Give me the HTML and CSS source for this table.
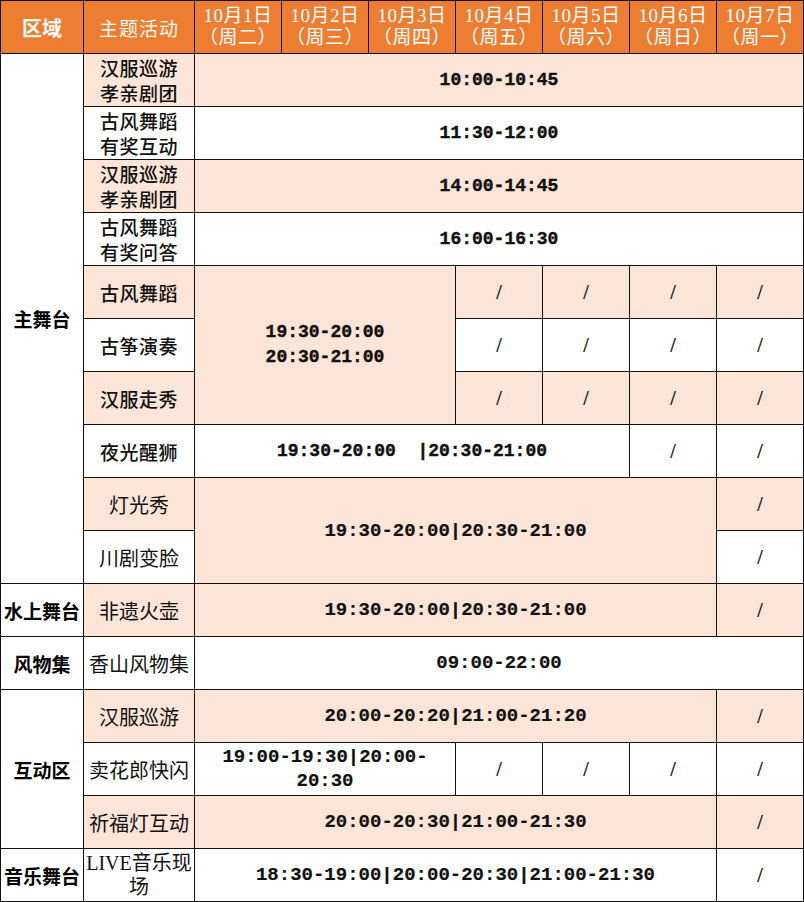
FILE: index.html
```html
<!DOCTYPE html>
<html lang="zh-CN">
<head>
<meta charset="utf-8">
<title>活动安排</title>
<link rel="stylesheet" href="styles.css">
</head>
<body>
<table class="sched">
  <colgroup>
    <col class="c-zone"><col class="c-act">
    <col class="c-day"><col class="c-day"><col class="c-day"><col class="c-day"><col class="c-day"><col class="c-day"><col class="c-day">
  </colgroup>
  <thead>
    <tr>
      <th class="zone-h">区域</th>
      <th class="act-h">主题活动</th>
      <th class="date">10月1日<br>（周二）</th>
      <th class="date">10月2日<br>（周三）</th>
      <th class="date">10月3日<br>（周四）</th>
      <th class="date">10月4日<br>（周五）</th>
      <th class="date">10月5日<br>（周六）</th>
      <th class="date">10月6日<br>（周日）</th>
      <th class="date">10月7日<br>（周一）</th>
    </tr>
  </thead>
  <tbody>
    <tr class="pk">
      <td class="zone" rowspan="10">主舞台</td>
      <td class="act">汉服巡游<br>孝亲剧团</td>
      <td class="t" colspan="7">10:00-10:45</td>
    </tr>
    <tr>
      <td class="act">古风舞蹈<br>有奖互动</td>
      <td class="t" colspan="7">11:30-12:00</td>
    </tr>
    <tr class="pk">
      <td class="act">汉服巡游<br>孝亲剧团</td>
      <td class="t" colspan="7">14:00-14:45</td>
    </tr>
    <tr>
      <td class="act">古风舞蹈<br>有奖问答</td>
      <td class="t" colspan="7">16:00-16:30</td>
    </tr>
    <tr class="pk">
      <td class="act">古风舞蹈</td>
      <td class="t t-two" colspan="3" rowspan="3">19:30-20:00<br>20:30-21:00</td>
      <td class="sl">/</td><td class="sl">/</td><td class="sl">/</td><td class="sl">/</td>
    </tr>
    <tr>
      <td class="act">古筝演奏</td>
      <td class="sl">/</td><td class="sl">/</td><td class="sl">/</td><td class="sl">/</td>
    </tr>
    <tr class="pk">
      <td class="act">汉服走秀</td>
      <td class="sl">/</td><td class="sl">/</td><td class="sl">/</td><td class="sl">/</td>
    </tr>
    <tr>
      <td class="act">夜光醒狮</td>
      <td class="t" colspan="5">19:30-20:00 &nbsp;|20:30-21:00</td>
      <td class="sl">/</td><td class="sl">/</td>
    </tr>
    <tr class="pk">
      <td class="act act-lo">灯光秀</td>
      <td class="t t-lo" colspan="6" rowspan="2">19:30-20:00|20:30-21:00</td>
      <td class="sl">/</td>
    </tr>
    <tr>
      <td class="act act-lo">川剧变脸</td>
      <td class="sl">/</td>
    </tr>
    <tr class="pk">
      <td class="zone wh">水上舞台</td>
      <td class="act act-lo">非遗火壶</td>
      <td class="t t-lo" colspan="6">19:30-20:00|20:30-21:00</td>
      <td class="sl">/</td>
    </tr>
    <tr>
      <td class="zone">风物集</td>
      <td class="act act-lo">香山风物集</td>
      <td class="t t-lo" colspan="7">09:00-22:00</td>
    </tr>
    <tr class="pk">
      <td class="zone wh" rowspan="3">互动区</td>
      <td class="act act-lo">汉服巡游</td>
      <td class="t t-lo" colspan="6">20:00-20:20|21:00-21:20</td>
      <td class="sl">/</td>
    </tr>
    <tr>
      <td class="act act-lo">卖花郎快闪</td>
      <td class="t t-lo t-wrap" colspan="3">19:00-19:30|20:00-<br>20:30</td>
      <td class="sl">/</td><td class="sl">/</td><td class="sl">/</td><td class="sl">/</td>
    </tr>
    <tr class="pk">
      <td class="act act-lo">祈福灯互动</td>
      <td class="t t-lo" colspan="6">20:00-20:30|21:00-21:30</td>
      <td class="sl">/</td>
    </tr>
    <tr>
      <td class="zone">音乐舞台</td>
      <td class="act act-lo act-live">LIVE音乐现<br>场</td>
      <td class="t t-lo" colspan="6">18:30-19:00|20:00-20:30|21:00-21:30</td>
      <td class="sl">/</td>
    </tr>
  </tbody>
</table>
</body>
</html>
```
FILE: styles.css
```css
html, body {
  margin: 0;
  padding: 0;
  background: #fff;
}

.sched {
  width: 804px;
  height: 902px;
  border-collapse: collapse;
  table-layout: fixed;
  font-family: "Noto Sans CJK SC", sans-serif;
  color: #111;
}

.c-zone { width: 83px; }
.c-act { width: 111px; }
.c-day { width: 87px; }

.sched th,
.sched td {
  border: 1.5px solid #111;
  padding: 0;
  text-align: center;
  vertical-align: middle;
  overflow: hidden;
}

.sched tr {
  height: 53px;
}

.sched th {
  background: #ED7D31;
  color: #fff;
  font-weight: 400;
}

.zone-h {
  font-size: 20px;
  font-weight: 700 !important;
}

.act-h {
  font-size: 19px;
  letter-spacing: 1px;
}

.date {
  font-family: "Liberation Serif", "Noto Sans CJK SC", serif;
  font-size: 19px;
  line-height: 22px;
  letter-spacing: 0.5px;
}

.pk td {
  background: #FCE4D6;
}

.sched td.zone,
.sched td.wh {
  background: #fff;
  font-size: 19px;
  font-weight: 700;
  color: #000;
  white-space: nowrap;
}

.act {
  font-size: 19px;
  line-height: 25px;
  font-weight: 500;
  letter-spacing: 0.5px;
}

.act-lo {
  font-size: 20px;
  font-weight: 400;
  letter-spacing: 0;
}

.act-live {
  line-height: 24px;
  font-family: "Liberation Serif", "Noto Sans CJK SC", serif;
}

.t {
  font-family: "Liberation Mono", monospace;
  font-weight: 700;
  font-size: 18px;
  padding-top: 3px;
  -webkit-text-stroke: 0.4px #111;
}

.t-two {
  line-height: 25px;
}

.t-lo {
  font-size: 19px;
  -webkit-text-stroke: 0.2px #111;
}

.t-wrap {
  line-height: 24px;
}

.sl {
  font-family: "Liberation Serif", serif;
  font-size: 20px;
  font-weight: 700;
  color: #222;
}
```
